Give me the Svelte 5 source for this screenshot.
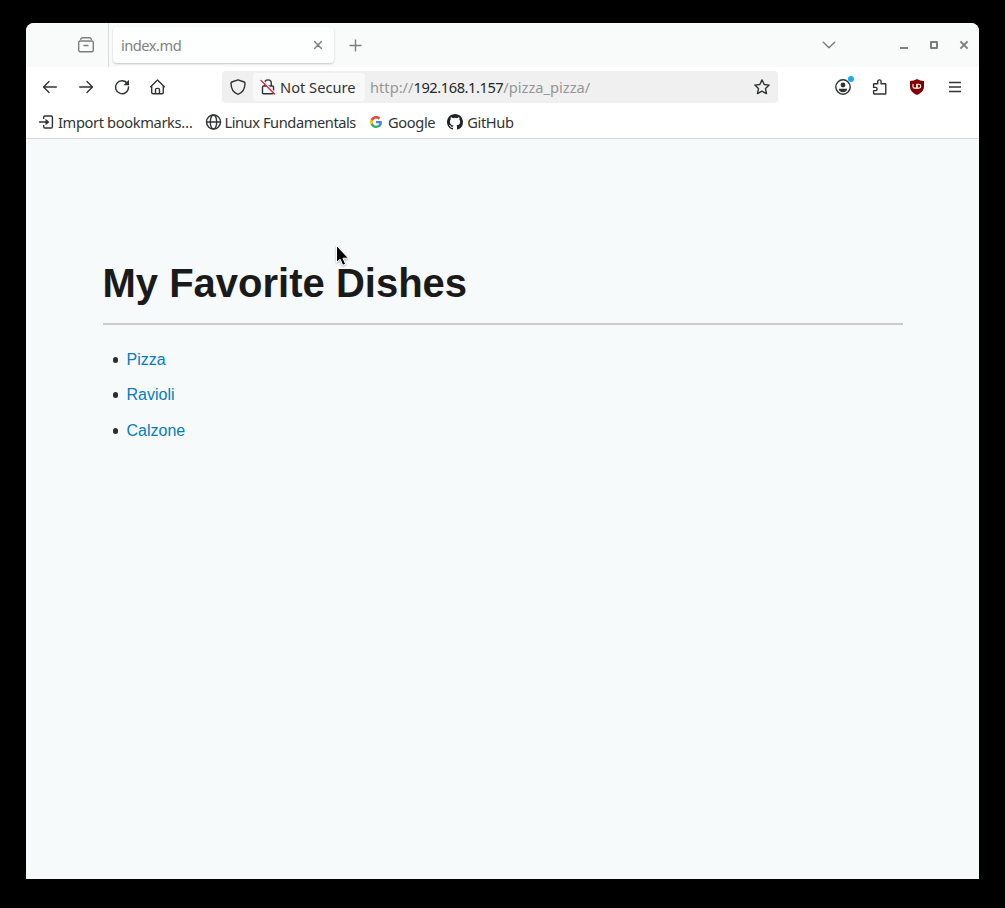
<script>
  const dishes = ['Pizza', 'Ravioli', 'Calzone'];
</script>

<div class="desktop">
  <div class="window">
    <header class="tabs">
      <svg class="archive" width="16" height="16" viewBox="0 0 16 16"><path d="M2.6 2.2 4 .8h8l1.4 1.4" /><rect x=".7" y="4" width="14.6" height="10.8" rx="1.5" /><path d="M6 8.5h4" /></svg>
      <span class="divider"></span>
      <div class="tab">
        <span>index.md</span>
        <svg width="8" height="8" viewBox="0 0 8 8"><path d="m.6.6 6.8 6.8m0-6.800L.6 7.400" /></svg>
      </div>
      <svg class="plus" width="13" height="13" viewBox="0 0 13 13"><path d="M6.500.5v12m-6-6h12" /></svg>
      <svg class="chevron" width="14" height="8" viewBox="0 0 14 8"><path d="m1.300 1.200 5.700 5.600 5.700-5.600" /></svg>
      <div class="controls">
        <svg width="8" height="10" viewBox="0 0 8 10"><path d="M0 8h8" /></svg>
        <svg width="8" height="10" viewBox="0 0 8 10"><rect x="1" y="2" width="6" height="6" /></svg>
        <svg width="8" height="10" viewBox="0 0 8 10"><path d="m.4 1.400 7.200 7.200m0-7.200L.4 8.600" /></svg>
      </div>
    </header>

    <nav class="toolbar">
      <div class="history">
        <svg width="16" height="16" viewBox="0 0 16 16"><path d="M14.300 8H1.600M7 2.500 1.500 8 7 13.500" /></svg>
        <svg width="16" height="16" viewBox="0 0 16 16"><path d="M1.700 8h12.700M9 2.500 14.500 8 9 13.500" /></svg>
        <svg width="16" height="16" viewBox="0 0 16 16"><path d="M13.400 4.600A6.500 6.500 0 1 0 14.500 8" /><path class="solid" d="M15 .8v5.400H9.400z" /></svg>
        <svg width="16" height="16" viewBox="0 0 16 16"><path d="M.7 7.700 7.500 1.100l6.800 6.600M1.700 7v6.500q0 1.300 1.300 1.300h9q1.300 0 1.300-1.300V7M5.500 14.500v-3.700q0-1.400 1.400-1.400h1.200q1.400 0 1.400 1.400v3.700" /></svg>
      </div>
      <div class="address">
        <svg class="shield" width="16" height="16" viewBox="0 0 16 16"><path d="M8 .8 14.200 3q.8.3.8 1.200C15 9 13 13.500 8 15.300 3 13.500 1 9 1 4.200Q1 3.300 1.800 3z" /></svg>
        <div class="security">
          <svg width="16" height="16" viewBox="0 0 16 16"><path d="M4.700 7V4.200a3.300 3.300 0 0 1 6.600 0V7M3.500 7h9q1 0 1 1v5.700q0 1-1 1h-9q-1 0-1-1V8q0-1 1-1z" /><path class="halo" d="m2.300 1.300 13 13" /><path class="slash" d="m1 1.500 13.500 13.500" /></svg>
          <span>Not Secure</span>
        </div>
        <span class="url">http://<b>192.168.1.157</b>/pizza_pizza/</span>
        <svg class="star" width="16" height="16" viewBox="0 0 16 16"><path d="m8 .9 2.200 4.600 5 .6-3.700 3.500 1 5L8 12.200l-4.500 2.400 1-5L.8 6.100l5-.6z" /></svg>
      </div>
      <div class="actions">
        <div class="account">
          <svg width="16" height="16" viewBox="0 0 16 16"><circle cx="8" cy="8" r="7.200" /><circle class="solid" cx="8" cy="6" r="2.400" /><path class="solid" d="M3.800 9.700h8.400c0 2-1.800 3.500-4.200 3.500S3.800 11.700 3.800 9.700z" /></svg>
          <i></i>
        </div>
        <svg width="16" height="16" viewBox="0 0 16 16"><path d="M5.700 4.700V2.600a1.700 1.700 0 0 1 3.400 0v2.100h4.200q.5 0 .5.500v9.200q0 .6-.6.6H2.200q-.6 0-.6-.6v-2.800h1.900a1.500 1.500 0 0 0 0-3.200H1.600V5.200q0-.5.600-.5z" /></svg>
        <svg width="16" height="16" viewBox="0 0 16 16"><path class="ublock" d="M8 0C6 1.300 3.700 2 1 2v5c0 4.400 2.200 6.800 7 9 4.800-2.200 7-4.600 7-9V2C12.300 2 10 1.300 8 0z" /><path class="mark" d="M4 5.300v2.500q0 1.300 1.500 1.300h2.400V5.300" /><path class="mark" d="M8 5.300h1.800a1.900 1.900 0 0 1 0 3.800H8z" /></svg>
        <svg width="16" height="16" viewBox="0 0 16 16"><path class="menu" d="M2 3.500h12M2 8h12M2 12.500h12" /></svg>
      </div>
    </nav>

    <div class="bookmarks">
      <a class="import" href="#import"><svg width="16" height="16" viewBox="0 0 16 16"><path d="M5.700 4.500V3.200Q5.700 2 6.900 2h6.300q1.200 0 1.200 1.200v9.600q0 1.200-1.200 1.200H6.900q-1.200 0-1.200-1.200v-1.300M1.500 8h7" /><path class="solid" d="m7.500 4.800 4 3.200-4 3.200z" /></svg><span>Import bookmarks…</span></a>
      <a class="linux" href="#linux"><svg width="16" height="16" viewBox="0 0 16 16"><circle cx="8.500" cy="8" r="7" /><ellipse cx="8.500" cy="8" rx="3.200" ry="7" /><path d="M1.500 8h14" /></svg><span>Linux Fundamentals</span></a>
      <a class="google" href="#google"><svg width="16" height="16" viewBox="0 0 48 48"><g class="g"><path fill="#ea4335" d="M24 13.500c3 0 5.500 1 7.500 3l5.600-5.600C33.600 7.700 29.200 6 24 6 17 6 11 10 8 15.800l6.500 5.100c1.500-4.400 5.300-7.400 9.500-7.400z" /><path fill="#4285f4" d="M41.500 24.400c0-1.200-.1-2.400-.3-3.500H24v7h9.800c-.4 2.300-1.700 4.200-3.700 5.500l6.200 4.800c3.300-3.100 5.200-8 5.200-13.800z" /><path fill="#fbbc05" d="M14.500 27.100a11 11 0 0 1 0-6.200L8 15.800a18 18 0 0 0 0 16.400z" /><path fill="#34a853" d="M24 42c4.900 0 9-1.600 12.300-4.300l-6.200-4.500c-1.600 1.100-3.700 1.800-6.100 1.800-4.600 0-8.200-3.200-9.500-7.900L8 32.200C11 38 17 42 24 42z" /></g></svg><span>Google</span></a>
      <a class="github" href="#github"><svg width="16" height="16" viewBox="0 0 16 16"><path class="octo" d="M8 0C3.580 0 0 3.580 0 8c0 3.540 2.290 6.530 5.470 7.590.4.070.55-.17.55-.38 0-.19-.01-.82-.01-1.490-2.010.37-2.530-.49-2.690-.94-.09-.23-.48-.94-.82-1.130-.28-.15-.68-.52-.01-.53.63-.01 1.080.58 1.230.82.72 1.210 1.870.87 2.330.66.07-.52.28-.87.51-1.070-1.780-.2-3.640-.89-3.640-3.950 0-.87.31-1.590.82-2.150-.08-.2-.36-1.020.08-2.120 0 0 .67-.21 2.200.82a7.600 7.600 0 0 1 4 0c1.530-1.040 2.200-.82 2.200-.82.44 1.100.16 1.920.08 2.120.51.56.82 1.270.82 2.150 0 3.070-1.870 3.750-3.650 3.950.29.25.54.73.54 1.480 0 1.070-.01 1.930-.01 2.200 0 .21.15.46.55.38A8 8 0 0 0 16 8c0-4.420-3.580-8-8-8z" /></svg><span>GitHub</span></a>
    </div>

    <main>
      <article>
        <h1>My Favorite Dishes</h1>
        <ul>
          {#each dishes as dish}
            <li><a href="#{dish}">{dish}</a></li>
          {/each}
        </ul>
      </article>
    </main>
  </div>
  <svg class="pointer" width="16" height="22" viewBox="0 0 16 22"><path d="M1.500.8v16.700l3.600-3.300 2.600 6.100 2.900-1.200-2.600-5.900h5.200z" /></svg>
</div>

<style>
  :global(body) { margin: 0; background: #000; }
  * { box-sizing: border-box; }
  .desktop { position: relative; height: 908px; padding: 23px 26px 29px; background: #000; font: 14.667px 'Noto Sans', sans-serif; color: #303334; overflow: hidden; }
  .window { height: 856px; display: flex; flex-direction: column; background: #fff; border-radius: 8px 8px 0 0; overflow: hidden; }
  svg { display: block; flex: none; fill: none; stroke: #303334; stroke-width: 1.400; stroke-linecap: round; stroke-linejoin: round; overflow: visible; }
  .solid { fill: #303334; stroke: none; }
  a { color: inherit; text-decoration: none; }

  .tabs { height: 44px; flex: none; display: flex; align-items: center; background: #f9fafa; padding-left: 52px; color: #808282; }
  .tabs svg { stroke: #7c7e7e; }
  .divider { width: 1px; height: 44px; margin: 0 4px 0 14px; background: #d9dbdb; }
  .tab { width: 221px; height: 36px; display: flex; align-items: center; justify-content: space-between; padding: 0 12px 0 8px; background: #fdfefe; border-radius: 4px; box-shadow: 0 1px 2px rgb(0 0 0 / 22%); letter-spacing: -.5px; }
  .plus { margin-left: 15px; stroke-linecap: butt; }
  .chevron { margin-left: auto; }
  .controls { display: flex; gap: 22px; margin: 0 11px 0 64px; }
  .controls svg { stroke-width: 2; stroke-linecap: butt; }

  .toolbar { height: 40px; flex: none; display: flex; align-items: center; padding: 0 16px; }
  .history { display: flex; gap: 20px; }
  .address { width: 556px; height: 32px; margin-left: 56px; display: flex; align-items: center; padding: 0 8px; background: #f0f0f0; border-radius: 4px; }
  .security { height: 28px; width: 112px; margin-left: 7px; padding-left: 7px; display: flex; align-items: center; gap: 4px; border-radius: 4px; background: #f9f9f9; white-space: nowrap; }
  .halo { stroke: #f9f9f9; }
  .slash { stroke: #e22850; }
  .url { margin-left: 5px; color: #969696; }
  .url b { font-weight: 400; color: #252727; letter-spacing: -.45px; }
  .star { margin-left: auto; }
  .actions { display: flex; gap: 21px; margin-left: auto; }
  .account { position: relative; margin-left: -1px; }
  .actions svg:last-child { margin-left: 1px; }
  .account svg:first-child { margin-left: 0; }
  .account i { position: absolute; left: 13px; top: -3px; width: 6px; height: 6px; border-radius: 50%; background: #12aeea; }
  .ublock { fill: #800000; stroke: none; }
  .mark { stroke: #fff; stroke-width: 1.100; }
  .menu { stroke-linecap: butt; }

  .bookmarks { height: 32px; flex: none; display: flex; align-items: center; border-bottom: 1px solid #d7dada; padding: 0 0 1px 12px; white-space: nowrap; }
  .bookmarks a { display: flex; align-items: center; gap: 4px; }
  .bookmarks span { letter-spacing: -.37px; }
  .bookmarks .linux { margin-left: 13px; gap: 3px; }
  .bookmarks .linux span { letter-spacing: -.44px; }
  .google { margin-left: 12px; }
  .github { margin-left: 12px; }
  .g path { stroke: none; }
  .octo { fill: #202428; stroke: none; }

  main { flex: 1; background: #f6fafb; font-family: 'Liberation Sans', Arial, sans-serif; font-size: 16px; }
  article { width: 800px; margin: 0 auto; padding-top: 120px; }
  h1 { margin: 0; height: 66px; border-bottom: 2px solid #c9cbcc; font-size: 40px; line-height: 48px; font-weight: 700; color: #1a1a1a; }
  ul { margin: 17px 0 0; padding: 0; list-style: none; }
  li { display: flex; align-items: center; height: 35px; line-height: 35px; padding-left: 10px; }
  li:last-child { margin-top: 1px; }
  li::before { content: ''; width: 5.500px; height: 5.500px; margin: 1px 8.500px 0 0; border-radius: 50%; background: #2b2e30; }
  li a { color: #077bbd; }

  .pointer { position: absolute; left: 335px; top: 245px; fill: #000; stroke: #fff; stroke-width: 1; filter: drop-shadow(0 1px 1px rgb(0 0 0 / 30%)); }
</style>
